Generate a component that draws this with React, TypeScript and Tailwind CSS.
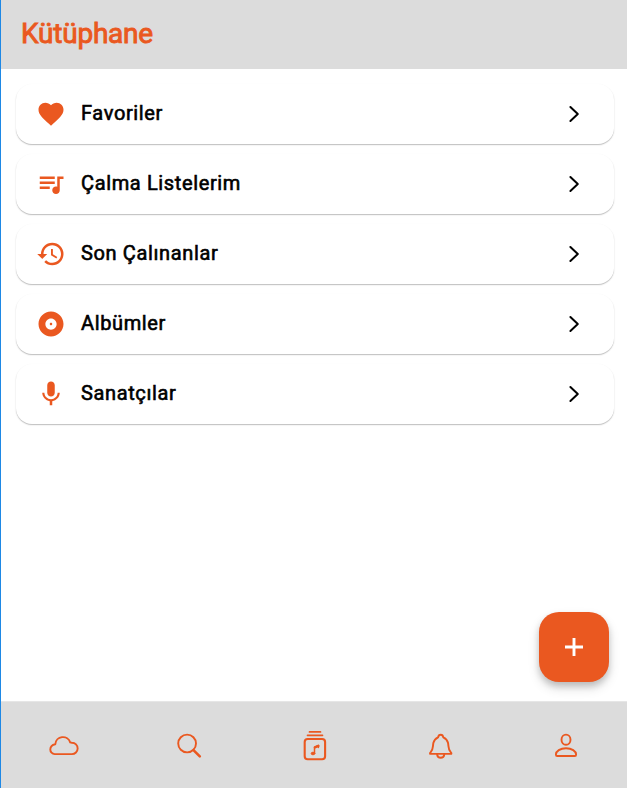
import React from "react";
import { MdFavorite, MdQueueMusic, MdHistory, MdAlbum, MdMic } from "react-icons/md";

const items = [
  { label: "Favoriler", Icon: MdFavorite },
  { label: "Çalma Listelerim", Icon: MdQueueMusic },
  { label: "Son Çalınanlar", Icon: MdHistory },
  { label: "Albümler", Icon: MdAlbum },
  { label: "Sanatçılar", Icon: MdMic },
];

function NavIcon({ label, children }: { label: string; children: React.ReactNode }) {
  return (
    <button aria-label={label} className="flex flex-1 justify-center">
      <svg
        className="size-8"
        viewBox="0 0 32 32"
        fill="none"
        stroke="currentColor"
        strokeWidth="1.9"
        strokeLinecap="round"
        strokeLinejoin="round"
      >
        {children}
      </svg>
    </button>
  );
}

export default function App() {
  return (
    <div className="h-[788px] w-[627px] overflow-hidden border-l border-[#1e88e5] bg-white font-['Roboto',sans-serif]">
      <div className="relative flex h-full w-[628px] flex-col">
        <header className="flex h-[69px] items-center bg-[#dcdcdc] pb-px pl-5">
          <h1 className="text-[28px] leading-8 font-normal tracking-[-0.22px] text-[#ea5820] [-webkit-text-stroke:0.9px_#ea5820]">Kütüphane</h1>
        </header>
        <main className="flex flex-1 flex-col gap-2.5 px-[15px] pt-[15px]">
          {items.map(({ label, Icon }) => (
            <div
              key={label}
              className="flex h-15 items-center rounded-[16px] bg-white pr-[30px] pl-5 shadow-[0_1px_1px_rgba(0,0,0,0.18),0_1px_2px_rgba(0,0,0,0.1)]"
            >
              <Icon className="size-[30px] text-[#ea5820]" />
              <span className="ml-[15px] flex-1 pb-0.5 text-[20px] leading-6 font-normal tracking-[0.63px] text-black [-webkit-text-stroke:0.6px_#000]">
                {label}
              </span>
              <svg className="size-5" viewBox="0 0 20 20" fill="none" stroke="#000" strokeWidth="2" strokeLinecap="round" strokeLinejoin="round">
                <path d="M6.4 3 13.8 10 6.4 17" />
              </svg>
            </div>
          ))}
        </main>
        <button
          aria-label="Ekle"
          className="absolute top-[611.5px] left-[538px] flex size-[70px] items-center justify-center rounded-[20px] bg-[#ea5820] shadow-[0_4px_6px_rgba(0,0,0,0.16),0_6px_12px_rgba(0,0,0,0.14)]"
        >
          <svg className="size-[30px]" viewBox="0 0 30 30" fill="none" stroke="#fff" strokeWidth="2.9">
            <path d="M15 6v18M6 15h18" />
          </svg>
        </button>
        <nav className="flex h-[87px] items-center border-t border-[#e6e6e6] bg-[#dcdcdc] pt-px text-[#ea5820]">
          <NavIcon label="Keşfet">
            <path d="M6.7 24.1H23.9A5.7 5.7 0 0 0 24 12.7Q22.8 12.6 22.2 12.4A7.65 7.65 0 0 0 7.3 14.2Q2.3 15.2 2.3 19.5A4.5 4.5 0 0 0 6.7 24.1Z" />
          </NavIcon>
          <NavIcon label="Ara">
            <circle cx="14.1" cy="13.5" r="8.9" />
            <path d="m20.7 20.3 6.1 6.1" strokeWidth="2.6" />
          </NavIcon>
          <NavIcon label="Kütüphane">
            <path d="M10.5 1.9h11M8.5 5.3h15" strokeWidth="1.7" />
            <rect x="5.7" y="9" width="20.4" height="20.2" rx="3" strokeWidth="2.1" />
            <path d="M15.5 23.5v-6.4l3.9-1.7v2" strokeWidth="1.5" />
            <path d="m15.9 17.4 3.5-1.5" strokeWidth="2.4" />
            <ellipse cx="14" cy="23.5" rx="1.8" ry="1.3" fill="currentColor" strokeWidth="1" />
          </NavIcon>
          <NavIcon label="Bildirimler">
            <path d="M5.1 23.9Q4.5 23.1 5.8 22C8.3 19.8 7.6 16.8 8.4 12.8Q9.3 8.9 13.1 7.3Q13.5 4.7 15.7 4.7T18.3 7.3Q22.1 8.9 23 12.8C23.8 16.8 23.1 19.8 25.6 22Q26.9 23.1 26.3 23.9Z" />
            <path d="M12.1 24.3Q12.5 27.8 15.7 27.8T19.3 24.3" />
          </NavIcon>
          <NavIcon label="Profil">
            <ellipse cx="16" cy="9.7" rx="4.5" ry="5.1" />
            <path d="M7.2 26H24.8Q26.1 26 26.1 24.4C26.1 21.3 21.8 18.2 16 18.2S5.9 21.3 5.9 24.4Q5.9 26 7.2 26Z" />
          </NavIcon>
        </nav>
      </div>
    </div>
  );
}
